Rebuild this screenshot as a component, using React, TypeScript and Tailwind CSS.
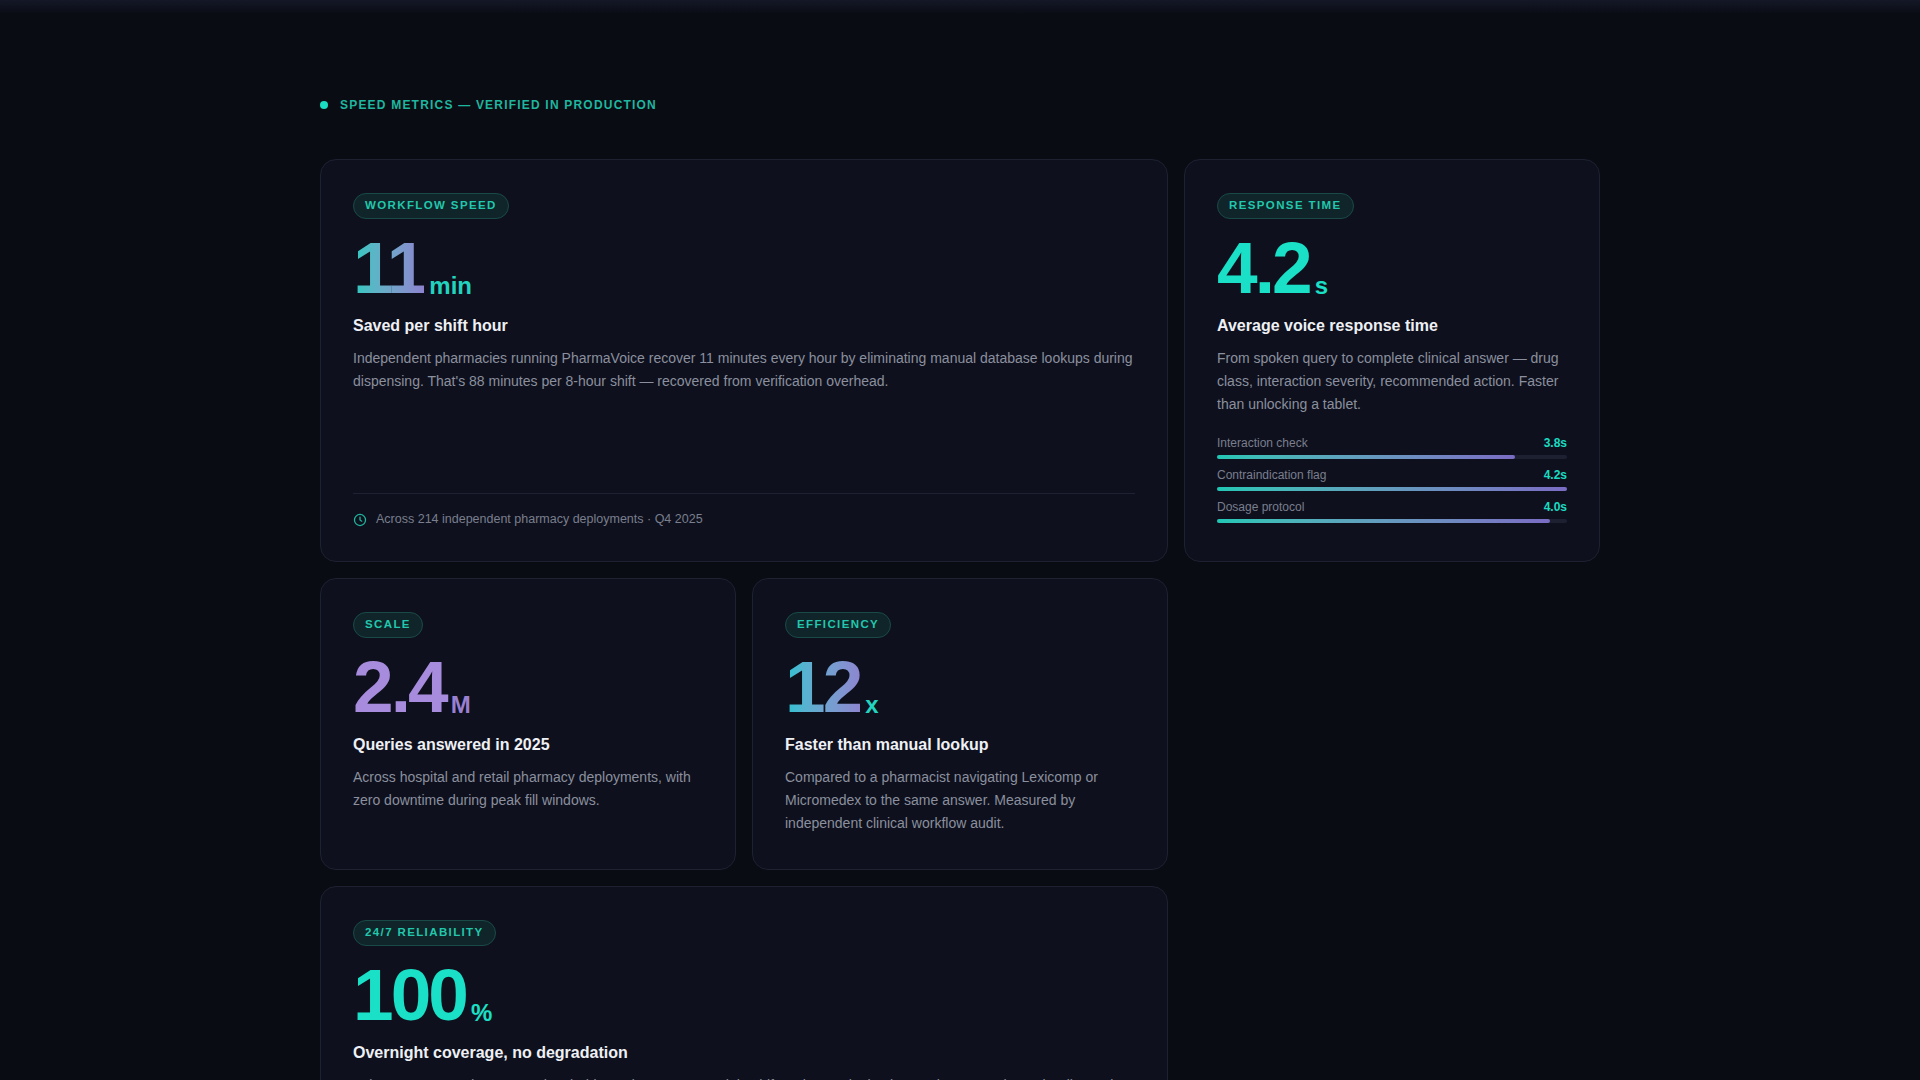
import React from 'react';

const font = { fontFamily: '"Liberation Sans", Arial, sans-serif' };

const Badge: React.FC<{ children: React.ReactNode }> = ({ children }) => (
  <span className="inline-flex items-center h-[26px] px-[11px] rounded-full border border-[#1a4a48] bg-[#0f2529] text-[11.5px] font-bold tracking-[0.12em] text-[#22c7ad]">
    {children}
  </span>
);

const Metric: React.FC<{ value: string; unit: string; valueClass: string; unitClass: string }> = ({
  value,
  unit,
  valueClass,
  unitClass,
}) => (
  <div className="mt-[16px] flex items-end gap-[5px] leading-none">
    <span className={`text-[73px] font-bold tracking-[-0.04em] leading-[0.9] ${valueClass}`}>{value}</span>
    <span className={`text-[24px] font-bold mb-[2px] ${unitClass}`}>{unit}</span>
  </div>
);

const Card: React.FC<{ className?: string; children: React.ReactNode }> = ({ className = '', children }) => (
  <div className={`rounded-[16px] border border-[#1d2131] bg-[#0e111d] p-8 ${className}`}>{children}</div>
);

const Title: React.FC<{ children: React.ReactNode }> = ({ children }) => (
  <h3 className="mt-[14px] text-[16px] font-bold text-[#eef0f5]">{children}</h3>
);

const Desc: React.FC<{ children: React.ReactNode }> = ({ children }) => (
  <p className="mt-[9px] text-[14px] leading-[23px] text-[#8b8f9e]">{children}</p>
);

const bars = [
  { label: 'Interaction check', value: '3.8s', pct: 85 },
  { label: 'Contraindication flag', value: '4.2s', pct: 100 },
  { label: 'Dosage protocol', value: '4.0s', pct: 95 },
];

export default function App() {
  return (
    <div style={font} className="min-h-screen bg-[#0a0c14] relative">
      <div className="absolute top-0 left-0 right-0 h-[14px] bg-gradient-to-b from-[#141827] to-transparent" />
      <div className="w-[1280px] mx-auto pt-[96px] pb-10">
        <div className="flex items-center gap-[12px]">
          <span className="w-[8px] h-[8px] rounded-full bg-[#19dcc2]" />
          <span className="text-[12px] font-bold tracking-[0.1em] text-[#1fb69f]">
            SPEED METRICS — VERIFIED IN PRODUCTION
          </span>
        </div>

        <div className="mt-[45px] grid grid-cols-3 gap-4">
          {/* Workflow speed */}
          <Card className="col-span-2 h-[403px] flex flex-col">
            <div><Badge>WORKFLOW SPEED</Badge></div>
            <Metric
              value="11"
              unit="min"
              valueClass="bg-gradient-to-r from-[#22c9c0] to-[#8c83d0] bg-clip-text text-transparent"
              unitClass="text-[#22d3bf]"
            />
            <Title>Saved per shift hour</Title>
            <Desc>
              Independent pharmacies running PharmaVoice recover 11 minutes every hour by eliminating manual database lookups during
              dispensing. That's 88 minutes per 8-hour shift — recovered from verification overhead.
            </Desc>
            <div className="mt-auto border-t border-[#1d2131] pt-[16px] flex items-center gap-[9px] text-[12.5px] text-[#7a7e8d]">
              <svg width="14" height="14" viewBox="0 0 24 24" fill="none" stroke="#1fb69f" strokeWidth="2.2" strokeLinecap="round">
                <circle cx="12" cy="12" r="9.5" />
                <path d="M12 7v5l3 2" />
              </svg>
              Across 214 independent pharmacy deployments · Q4 2025
            </div>
          </Card>

          {/* Response time */}
          <Card className="h-[403px]">
            <Badge>RESPONSE TIME</Badge>
            <Metric value="4.2" unit="s" valueClass="text-[#19e0c6]" unitClass="text-[#19e0c6]" />
            <Title>Average voice response time</Title>
            <Desc>
              From spoken query to complete clinical answer — drug class, interaction severity, recommended action. Faster than
              unlocking a tablet.
            </Desc>
            <div className="mt-[20px] flex flex-col gap-[9px]">
              {bars.map((b) => (
                <div key={b.label}>
                  <div className="flex justify-between text-[12px] leading-[14px]">
                    <span className="text-[#7a7e8d]">{b.label}</span>
                    <span className="font-bold text-[#19dcc2]">{b.value}</span>
                  </div>
                  <div className="mt-[5px] h-[4px] rounded-full bg-[#1c2030]">
                    <div
                      className="h-full rounded-full bg-gradient-to-r from-[#1fc7b5] to-[#7a6cc4]"
                      style={{ width: `${b.pct}%` }}
                    />
                  </div>
                </div>
              ))}
            </div>
          </Card>

          {/* Scale */}
          <Card className="h-[292px]">
            <Badge>SCALE</Badge>
            <Metric value="2.4" unit="M" valueClass="text-[#a78bdc]" unitClass="text-[#9a80d0]" />
            <Title>Queries answered in 2025</Title>
            <Desc>Across hospital and retail pharmacy deployments, with zero downtime during peak fill windows.</Desc>
          </Card>

          {/* Efficiency */}
          <Card className="h-[292px]">
            <Badge>EFFICIENCY</Badge>
            <Metric
              value="12"
              unit="x"
              valueClass="bg-gradient-to-r from-[#22c2d0] to-[#8c86d0] bg-clip-text text-transparent"
              unitClass="text-[#22d3bf]"
            />
            <Title>Faster than manual lookup</Title>
            <Desc>
              Compared to a pharmacist navigating Lexicomp or Micromedex to the same answer. Measured by independent clinical workflow
              audit.
            </Desc>
          </Card>
          <div />

          {/* Reliability */}
          <Card className="col-span-2 h-[292px]">
            <Badge>24/7 RELIABILITY</Badge>
            <Metric value="100" unit="%" valueClass="text-[#19e0c6]" unitClass="text-[#19e0c6]" />
            <Title>Overnight coverage, no degradation</Title>
            <Desc>
              Voice accuracy and response time hold steady across overnight shifts, when a single pharmacist covers the entire
              dispensing queue.
            </Desc>
          </Card>
        </div>
      </div>
    </div>
  );
}
